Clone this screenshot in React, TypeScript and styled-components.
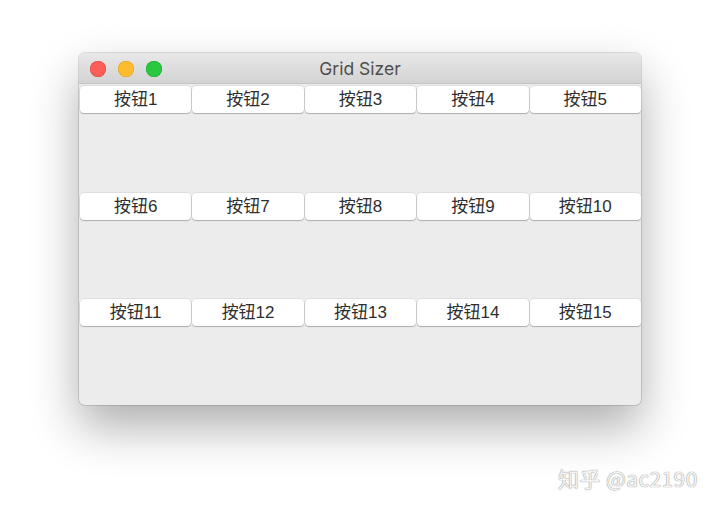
import React from "react";
import styled, { createGlobalStyle } from "styled-components";

const Global = createGlobalStyle`
  html, body { margin: 0; padding: 0; background: #ffffff; }
  body { width: 720px; height: 509px; overflow: hidden; position: relative; }
`;

const Page = styled.div`
  padding: 53px 0 0 79px;
  width: 720px;
  height: 509px;
  box-sizing: border-box;
`;

const Window = styled.div`
  width: 562px;
  height: 352px;
  border-radius: 6px;
  overflow: hidden;
  background: #ececec;
  box-shadow: 0 22px 48px rgba(0, 0, 0, 0.32), 0 0 0 1px rgba(0, 0, 0, 0.12);
  display: flex;
  flex-direction: column;
`;

const TitleBar = styled.div`
  height: 31px;
  flex: none;
  position: relative;
  display: flex;
  align-items: center;
  justify-content: center;
  background: linear-gradient(#e9e8e9, #d4d3d4);
  border-bottom: 1px solid #c4c2c4;
  box-sizing: border-box;
`;

const Lights = styled.div`
  position: absolute;
  left: 11px;
  top: 8px;
  display: flex;
  gap: 12px;
`;

const Light = styled.span<{ $c: string; $b: string }>`
  width: 16px;
  height: 16px;
  border-radius: 50%;
  background: ${(p) => p.$c};
  box-shadow: inset 0 0 0 0.5px ${(p) => p.$b};
`;

const Title = styled.div`
  font-family: Inter, "Liberation Sans", sans-serif;
  font-size: 17.5px;
  color: #4d4d4d;
`;

const Grid = styled.div`
  flex: 1;
  display: grid;
  grid-template-columns: repeat(5, 1fr);
  grid-template-rows: repeat(3, 1fr);
  padding-top: 1px;
`;

const Cell = styled.div`
  display: flex;
  align-items: flex-start;
  padding: 1px 0 0 1px;
`;

const Button = styled.button`
  width: 100%;
  height: 27px;
  border: none;
  border-radius: 4px;
  background: #ffffff;
  box-shadow: 0 1px 1px rgba(0, 0, 0, 0.22), 0 0 0 0.5px rgba(0, 0, 0, 0.12);
  font-family: "Liberation Sans", "Noto Sans CJK SC", sans-serif;
  font-size: 17px;
  color: #2e2e2e;
  padding: 0;
  display: flex;
  align-items: center;
  justify-content: center;
  line-height: 1;
`;

const Watermark = styled.div`
  position: absolute;
  left: 558px;
  top: 463px;
  font-family: "Noto Sans CJK SC", "Liberation Sans", sans-serif;
  font-size: 21px;
  color: #f4f4f4;
  text-shadow: 0 0 1px #8a8a8a, 0 0 1px #a8a8a8;
  letter-spacing: 0.4px;
`;

export default function App() {
  const labels = Array.from({ length: 15 }, (_, i) => `按钮${i + 1}`);
  return (
    <>
      <Global />
      <Page>
        <Window>
          <TitleBar>
            <Lights>
              <Light $c="#fc5f57" $b="#e0443e" />
              <Light $c="#fdbc2e" $b="#dea123" />
              <Light $c="#2ac840" $b="#1aab29" />
            </Lights>
            <Title>Grid Sizer</Title>
          </TitleBar>
          <Grid>
            {labels.map((l) => (
              <Cell key={l}>
                <Button>{l}</Button>
              </Cell>
            ))}
          </Grid>
        </Window>
      </Page>
      <Watermark>知乎 @ac2190</Watermark>
    </>
  );
}
